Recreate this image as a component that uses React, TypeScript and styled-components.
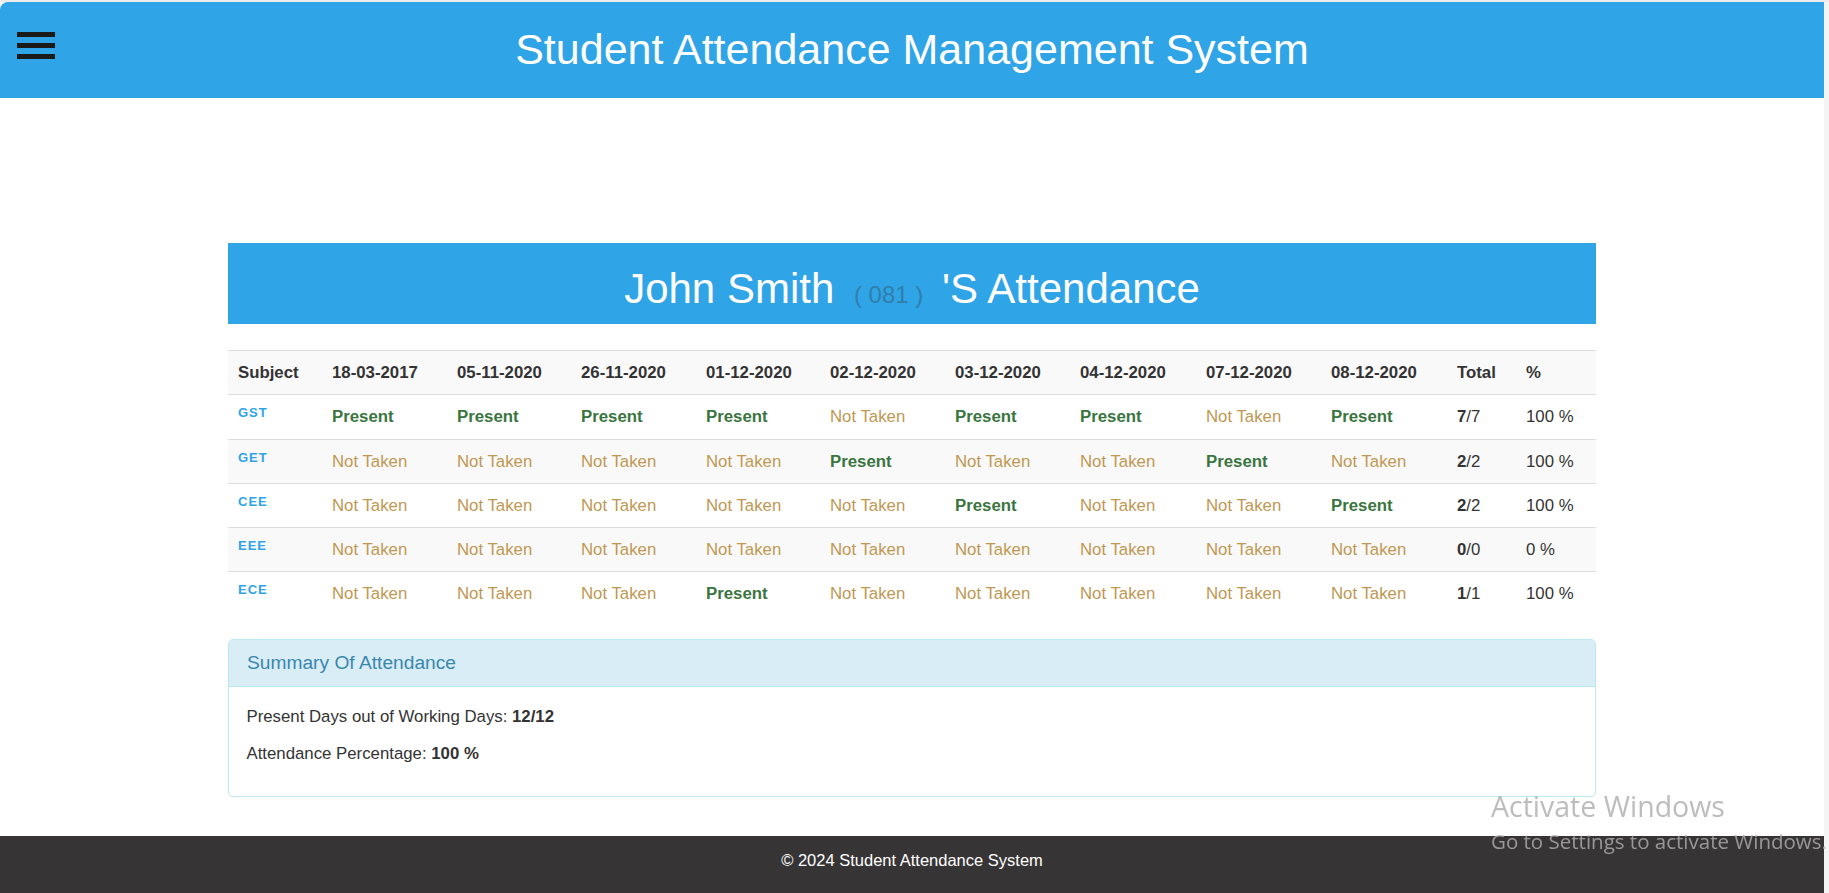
import React from 'react'
import styled, { createGlobalStyle } from 'styled-components'

const GlobalStyle = createGlobalStyle`
  html, body {
    margin: 0;
    padding: 0;
    height: 100%;
    overflow: hidden;
    background: #ffffff;
  }
  body {
    font-family: "Liberation Sans", Arial, Helvetica, sans-serif;
    color: #333333;
  }
  * {
    box-sizing: border-box;
  }
`

const Page = styled.div`
  display: flex;
  height: 100vh;
  border-top: 2px solid #ececec;
`

const Main = styled.div`
  flex: 1;
  display: flex;
  flex-direction: column;
  min-width: 0;
`

const ScrollStrip = styled.div`
  width: 5px;
  background: #f4f4f4;
`

const TopBar = styled.header`
  height: 96px;
  background: #2fa4e7;
  border-top-left-radius: 8px;
  display: grid;
  grid-template-columns: 1fr auto 1fr;
  align-items: center;
`

const Burger = styled.div`
  align-self: start;
  margin: 30px 0 0 17px;
  width: 38px;
  display: flex;
  flex-direction: column;
  gap: 6px;

  span {
    display: block;
    height: 5px;
    background: #1a1a1a;
  }
`

const AppTitle = styled.h1`
  margin: 0 0 2px;
  color: #ffffff;
  font-weight: 400;
  font-size: 43px;
  white-space: nowrap;
`

const Content = styled.main`
  flex: 1;
  padding-top: 145px;
`

const Container = styled.div`
  width: 1368px;
  margin: 0 auto;
`

const Banner = styled.div`
  background: #2fa4e7;
  text-align: center;
  padding: 23px 0 12px;
`

const BannerTitle = styled.h1`
  margin: 0;
  font-size: 42px;
  line-height: 46px;
  font-weight: 400;
  color: #ffffff;

  small {
    font-size: 24px;
    line-height: 0;
    color: #317eac;
    margin: 0 7px 0 8px;
  }
`

const Table = styled.table`
  width: 100%;
  margin-top: 26px;
  border-collapse: collapse;
  border-spacing: 0;
  table-layout: fixed;
  font-size: 16.8px;
  line-height: 23.3px;
`

const Row = styled.tr<{ $striped?: boolean }>`
  background: ${({ $striped }) => ($striped ? '#f9f9f9' : '#ffffff')};
`

const Cell = styled.td<{ $head?: boolean }>`
  padding: 10px 9.3px 10px 10px;
  vertical-align: top;
  border-top: 1px solid #dddddd;
  font-weight: ${({ $head }) => ($head ? 700 : 400)};
  color: #333333;
  white-space: nowrap;
`

const Code = styled.a`
  display: inline-block;
  vertical-align: top;
  margin-top: 1px;
  line-height: 1;
  font-size: 13px;
  font-weight: 700;
  letter-spacing: 1px;
  color: #2fa4e7;
  text-decoration: none;
`

const Status = styled.span<{ $present: boolean }>`
  font-weight: ${({ $present }) => ($present ? 700 : 400)};
  color: ${({ $present }) => ($present ? '#3a7540' : '#c09853')};
`

const Panel = styled.div`
  margin-top: 23px;
  border: 1px solid #bce8f1;
  border-radius: 5px;
  overflow: hidden;
`

const PanelHeading = styled.div`
  background: #d9edf7;
  border-bottom: 1px solid #bce8f1;
  padding: 12px 18px;
  font-size: 19.2px;
  line-height: 22px;
  color: #3a87ad;
`

const PanelBody = styled.div`
  padding: 18px 17.5px 17px;
  font-size: 16.8px;
  line-height: 23.3px;

  p {
    margin: 0 0 14px;
  }
`

const Footer = styled.footer`
  height: 57px;
  padding-bottom: 8px;
  background: #373435;
  color: #ffffff;
  font-size: 16.5px;
  display: flex;
  align-items: center;
  justify-content: center;
`

const Watermark = styled.div`
  position: fixed;
  left: 1491px;
  top: 786px;
  font-family: "Open Sans", "Noto Sans", sans-serif;
  color: rgba(175, 175, 175, 0.82);
  pointer-events: none;
  white-space: nowrap;

  div:first-child {
    font-size: 28.5px;
    line-height: 40px;
  }
  div:last-child {
    font-size: 20.5px;
    line-height: 30px;
  }
`

const dates = [
  '18-03-2017',
  '05-11-2020',
  '26-11-2020',
  '01-12-2020',
  '02-12-2020',
  '03-12-2020',
  '04-12-2020',
  '07-12-2020',
  '08-12-2020'
]

const colWidths = [94, 125, 124, 125, 124, 125, 125, 126, 125, 126, 69, 80]

// 1 = present, 0 = not taken
const subjects: { code: string; marks: number[]; present: number; total: number; pct: string }[] = [
  { code: 'GST', marks: [1, 1, 1, 1, 0, 1, 1, 0, 1], present: 7, total: 7, pct: '100 %' },
  { code: 'GET', marks: [0, 0, 0, 0, 1, 0, 0, 1, 0], present: 2, total: 2, pct: '100 %' },
  { code: 'CEE', marks: [0, 0, 0, 0, 0, 1, 0, 0, 1], present: 2, total: 2, pct: '100 %' },
  { code: 'EEE', marks: [0, 0, 0, 0, 0, 0, 0, 0, 0], present: 0, total: 0, pct: '0 %' },
  { code: 'ECE', marks: [0, 0, 0, 1, 0, 0, 0, 0, 0], present: 1, total: 1, pct: '100 %' }
]

export default function App() {
  return (
    <>
      <GlobalStyle />
      <Page>
        <Main>
          <TopBar>
            <Burger>
              <span />
              <span />
              <span />
            </Burger>
            <AppTitle>Student Attendance Management System</AppTitle>
            <div />
          </TopBar>

          <Content>
            <Container>
              <Banner>
                <BannerTitle>
                  John Smith <small>( 081 )</small> 'S Attendance
                </BannerTitle>
              </Banner>

              <Table>
                <colgroup>
                  {colWidths.map((w, i) => (
                    <col key={i} style={{ width: w }} />
                  ))}
                </colgroup>
                <tbody>
                  <Row $striped>
                    <Cell $head>Subject</Cell>
                    {dates.map((d) => (
                      <Cell $head key={d}>
                        {d}
                      </Cell>
                    ))}
                    <Cell $head>Total</Cell>
                    <Cell $head>%</Cell>
                  </Row>
                  {subjects.map((s, idx) => (
                    <Row key={s.code} $striped={idx % 2 === 1}>
                      <Cell>
                        <Code href="#">{s.code}</Code>
                      </Cell>
                      {s.marks.map((m, i) => (
                        <Cell key={i}>
                          <Status $present={m === 1}>{m === 1 ? 'Present' : 'Not Taken'}</Status>
                        </Cell>
                      ))}
                      <Cell>
                        <b>{s.present}</b>/{s.total}
                      </Cell>
                      <Cell>{s.pct}</Cell>
                    </Row>
                  ))}
                </tbody>
              </Table>

              <Panel>
                <PanelHeading>Summary Of Attendance</PanelHeading>
                <PanelBody>
                  <p>
                    Present Days out of Working Days: <b>12/12</b>
                  </p>
                  <p>
                    Attendance Percentage: <b>100 %</b>
                  </p>
                </PanelBody>
              </Panel>
            </Container>
          </Content>

          <Footer>© 2024 Student Attendance System</Footer>
        </Main>
        <ScrollStrip />
      </Page>

      <Watermark>
        <div>Activate Windows</div>
        <div>Go to Settings to activate Windows.</div>
      </Watermark>
    </>
  )
}
